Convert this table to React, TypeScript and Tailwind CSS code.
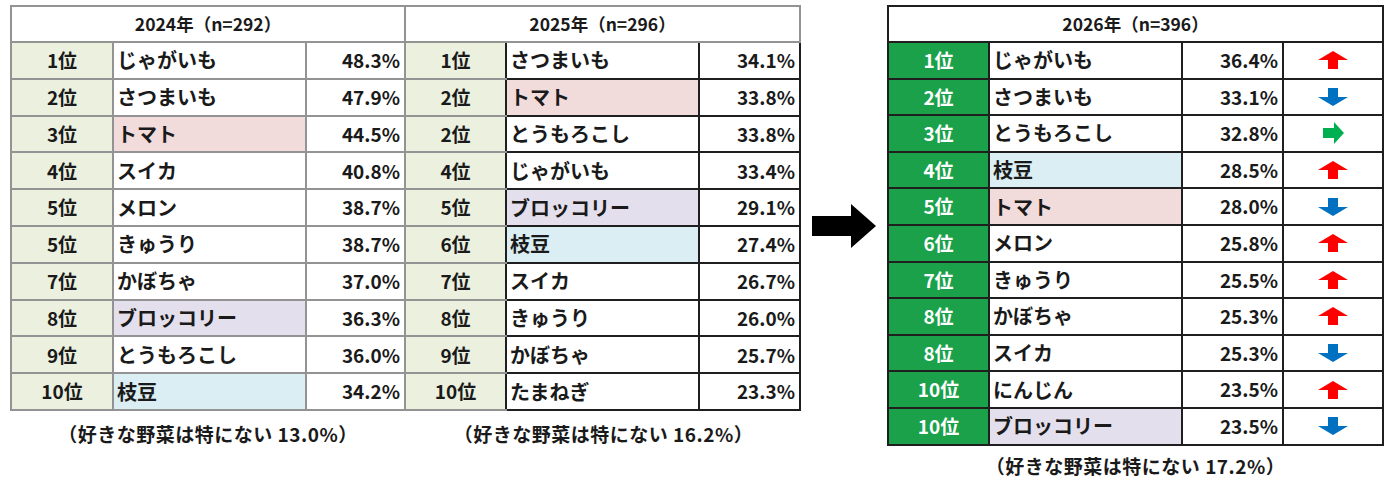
import React from "react";

type Row = { rank: string; name: string; pct: string; tint?: string; trend?: "up" | "down" | "flat" };

const tintClass: Record<string, string> = {
  pink: "bg-[#f2dcdb]",
  purple: "bg-[#e4dfec]",
  blue: "bg-[#daeef3]",
};

const y2024: Row[] = [
  { rank: "1位", name: "じゃがいも", pct: "48.3%" },
  { rank: "2位", name: "さつまいも", pct: "47.9%" },
  { rank: "3位", name: "トマト", pct: "44.5%", tint: "pink" },
  { rank: "4位", name: "スイカ", pct: "40.8%" },
  { rank: "5位", name: "メロン", pct: "38.7%" },
  { rank: "5位", name: "きゅうり", pct: "38.7%" },
  { rank: "7位", name: "かぼちゃ", pct: "37.0%" },
  { rank: "8位", name: "ブロッコリー", pct: "36.3%", tint: "purple" },
  { rank: "9位", name: "とうもろこし", pct: "36.0%" },
  { rank: "10位", name: "枝豆", pct: "34.2%", tint: "blue" },
];

const y2025: Row[] = [
  { rank: "1位", name: "さつまいも", pct: "34.1%" },
  { rank: "2位", name: "トマト", pct: "33.8%", tint: "pink" },
  { rank: "2位", name: "とうもろこし", pct: "33.8%" },
  { rank: "4位", name: "じゃがいも", pct: "33.4%" },
  { rank: "5位", name: "ブロッコリー", pct: "29.1%", tint: "purple" },
  { rank: "6位", name: "枝豆", pct: "27.4%", tint: "blue" },
  { rank: "7位", name: "スイカ", pct: "26.7%" },
  { rank: "8位", name: "きゅうり", pct: "26.0%" },
  { rank: "9位", name: "かぼちゃ", pct: "25.7%" },
  { rank: "10位", name: "たまねぎ", pct: "23.3%" },
];

const y2026: Row[] = [
  { rank: "1位", name: "じゃがいも", pct: "36.4%", trend: "up" },
  { rank: "2位", name: "さつまいも", pct: "33.1%", trend: "down" },
  { rank: "3位", name: "とうもろこし", pct: "32.8%", trend: "flat" },
  { rank: "4位", name: "枝豆", pct: "28.5%", tint: "blue", trend: "up" },
  { rank: "5位", name: "トマト", pct: "28.0%", tint: "pink", trend: "down" },
  { rank: "6位", name: "メロン", pct: "25.8%", trend: "up" },
  { rank: "7位", name: "きゅうり", pct: "25.5%", trend: "up" },
  { rank: "8位", name: "かぼちゃ", pct: "25.3%", trend: "up" },
  { rank: "8位", name: "スイカ", pct: "25.3%", trend: "down" },
  { rank: "10位", name: "にんじん", pct: "23.5%", trend: "up" },
  { rank: "10位", name: "ブロッコリー", pct: "23.5%", tint: "purple", trend: "down" },
];

function TrendArrow({ trend }: { trend?: Row["trend"] }) {
  if (trend === "up")
    return (
      <svg width="30" height="18" viewBox="0 0 30 18" className="mx-auto block">
        <path d="M15 0 L30 9 L20 9 L20 18 L10 18 L10 9 L0 9 Z" fill="#ff0000" />
      </svg>
    );
  if (trend === "down")
    return (
      <svg width="30" height="18" viewBox="0 0 30 18" className="mx-auto block">
        <path d="M10 0 H20 V9 H30 L15 18 L0 9 H10 Z" fill="#0070c0" />
      </svg>
    );
  return (
    <svg width="21" height="22" viewBox="0 0 21 22" className="mx-auto block">
      <path d="M0 6 H11 V0 L21 11 L11 22 V16 H0 Z" fill="#00b050" />
    </svg>
  );
}

const font = "font-['Noto_Sans_CJK_JP',sans-serif] font-bold text-[#1a1a1a]";

function Caption({ text, className }: { text: string; className: string }) {
  return <p className={`text-[19px] tracking-[0.5px] leading-[26px] text-center ${className}`}>{text}</p>;
}

export default function App() {
  return (
    <div className={`w-[1391px] h-[483px] bg-white flex items-start pl-[10px] pt-[5px] ${font}`}>
      {/* 2024 */}
      <div className="flex flex-col">
        <table className="table-fixed border-collapse w-[394px] border-2 border-[#939393]">
          <colgroup>
            <col className="w-[102px]" />
            <col className="w-[193px]" />
            <col className="w-[99px]" />
          </colgroup>
          <thead>
            <tr className="h-[36px]">
              <th colSpan={3} className="border-2 border-[#939393] text-[17.5px] font-bold">
                2024年（n=292）
              </th>
            </tr>
          </thead>
          <tbody>
            {y2024.map((r, i) => (
              <tr key={i} className="h-[36.8px] text-[19px]">
                <td className="border-2 border-[#939393] bg-[#ebf1de] text-center">{r.rank}</td>
                <td className={`border-2 border-[#939393] pl-[3px] text-[20px] ${r.tint ? tintClass[r.tint] : ""}`}>{r.name}</td>
                <td className="border-2 border-[#939393] text-right pr-[4px]">{r.pct}</td>
              </tr>
            ))}
          </tbody>
        </table>
        <Caption text="（好きな野菜は特にない 13.0%）" className="mt-[10px]" />
      </div>

      {/* 2025 */}
      <div className="flex flex-col">
        <table className="table-fixed border-collapse w-[394px] border-2 border-l-0 border-[#939393]">
          <colgroup>
            <col className="w-[100px]" />
            <col className="w-[193px]" />
            <col className="w-[101px]" />
          </colgroup>
          <thead>
            <tr className="h-[36px]">
              <th colSpan={3} className="border-2 border-l-0 border-[#939393] text-[17.5px] font-bold">
                2025年（n=296）
              </th>
            </tr>
          </thead>
          <tbody>
            {y2025.map((r, i) => (
              <tr key={i} className="h-[36.8px] text-[19px]">
                <td className="border-2 border-r-0 border-l-0 border-[#939393] bg-[#ebf1de] text-center">{r.rank}</td>
                <td className={`border-2 border-[#1f1f1f] pl-[3px] text-[20px] ${r.tint ? tintClass[r.tint] : ""}`}>{r.name}</td>
                <td className="border-2 border-[#1f1f1f] text-right pr-[4px]">{r.pct}</td>
              </tr>
            ))}
          </tbody>
        </table>
        <Caption text="（好きな野菜は特にない 16.2%）" className="mt-[10px]" />
      </div>

      {/* arrow */}
      <div className="w-[86px] h-[442px] flex items-center justify-center">
        <svg width="64" height="44" viewBox="0 0 64 44">
          <path d="M0 12 H39 V0 L64 22 L39 44 V32 H0 Z" fill="#000" />
        </svg>
      </div>

      {/* 2026 */}
      <div className="flex flex-col">
        <table className="table-fixed border-collapse w-[495px] border-2 border-[#1f1f1f]">
          <colgroup>
            <col className="w-[101px]" />
            <col className="w-[193px]" />
            <col className="w-[101px]" />
            <col className="w-[100px]" />
          </colgroup>
          <thead>
            <tr className="h-[36px]">
              <th colSpan={4} className="border-2 border-[#1f1f1f] text-[17.5px] font-bold">
                2026年（n=396）
              </th>
            </tr>
          </thead>
          <tbody>
            {y2026.map((r, i) => (
              <tr key={i} className="h-[36.6px] text-[19px]">
                <td className="border-2 border-[#1f1f1f] bg-[#1aa14a] text-white text-center">{r.rank}</td>
                <td className={`border-2 border-[#1f1f1f] pl-[3px] text-[20px] ${r.tint ? tintClass[r.tint] : ""}`}>{r.name}</td>
                <td className="border-2 border-[#1f1f1f] text-right pr-[4px]">{r.pct}</td>
                <td className="border-2 border-[#1f1f1f]">
                  <TrendArrow trend={r.trend} />
                </td>
              </tr>
            ))}
          </tbody>
        </table>
        <Caption text="（好きな野菜は特にない 17.2%）" className="mt-[7px]" />
      </div>
    </div>
  );
}
